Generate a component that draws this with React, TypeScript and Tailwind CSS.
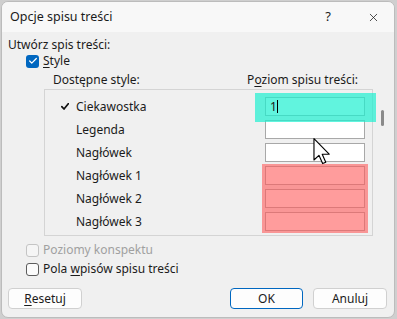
import { Check, X } from 'lucide-react';

const styles = ['Ciekawostka', 'Legenda', 'Nagłówek', 'Nagłówek 1', 'Nagłówek 2', 'Nagłówek 3'];

const Checkbox = ({ checked, disabled }: { checked?: boolean; disabled?: boolean }) => (
  <div
    className={
      checked
        ? 'w-[13px] h-[13px] rounded-[3px] bg-[#0067c0] flex items-center justify-center'
        : disabled
          ? 'w-[13px] h-[13px] rounded-[3px] border border-[#c4c4c4] bg-[#f5f5f5]'
          : 'w-[13px] h-[13px] rounded-[3px] border border-[#5c5c5c] bg-[#fbfbfb]'
    }
  >
    {checked && <Check className="w-[10px] h-[10px] text-white" strokeWidth={3} />}
  </div>
);

const Cursor = () => (
  <svg width="19" height="27" viewBox="0 0 13 19" className="absolute left-[268px] top-[48px]">
    <path d="M0.5 0.5 L0.5 15.5 L4 12.2 L6.6 18 L8.8 17 L6.3 11.4 L11.2 11.4 Z" fill="white" stroke="black" strokeWidth="0.8" strokeLinejoin="round" />
  </svg>
);

export default function App() {
  return (
    <div className="w-[397px] h-[319px] bg-[#cfcfcf] pl-[1px] pt-[1px] pr-[2px] pb-[1px] font-['Noto_Sans',sans-serif] text-[12px] text-[#1b1b1b]">
      <div className="h-full rounded-[7px] border border-[#bcbcbc] bg-[#f0f0f0] overflow-hidden flex flex-col">
        {/* Title bar */}
        <div className="h-[30px] shrink-0 bg-[#f8f8f8] flex items-center pl-[8px] pr-[14px]">
          <span className="text-[12.5px] flex-1">Opcje spisu treści</span>
          <span className="text-[13px] mr-[36px]">?</span>
          <X className="w-[13px] h-[13px] text-[#1b1b1b]" strokeWidth={1.4} />
        </div>

        {/* Body */}
        <div className="flex-1 flex flex-col px-[6px]">
          <div className="mt-[5px] leading-[16px]">Utwórz spis treści:</div>
          <div className="ml-[18px] flex items-center gap-[4px] leading-[16px]">
            <Checkbox checked />
            <span>
              <span className="underline underline-offset-2">S</span>tyle
            </span>
          </div>
          <div className="mt-[3px] flex leading-[16px]">
            <span className="ml-[45px]">Dostępne style:</span>
            <span className="ml-auto mr-[30px]">
              P<span className="underline underline-offset-2">o</span>ziom spisu treści:
            </span>
          </div>

          <div className="flex mt-[1px]">
            <div className="relative ml-[36px] w-[329px] h-[147px] border border-[#d4d4d4] pt-[5px]">
              {styles.map((s, i) => (
                <div key={s} className="h-[23px] flex items-center">
                  <div className="w-[31px] flex justify-end pr-[7px]">
                    {i === 0 && (
                      <svg width="8" height="7" viewBox="0 0 8 7">
                        <path d="M0.8 3.6 L3 6 L7.3 0.7" fill="none" stroke="#111" strokeWidth="1.7" strokeLinecap="round" strokeLinejoin="round" />
                      </svg>
                    )}
                  </div>
                  <span className="flex-1">{s}</span>
                  <div className="w-[100px] h-[19px] mr-[7px] bg-white border border-[#a8a8a8] flex items-center pl-[4px]">
                    {i === 0 && (
                      <span className="relative z-10 flex items-center">
                        <span className="leading-none">1</span>
                        <span className="w-[1px] h-[13px] bg-black" />
                      </span>
                    )}
                  </div>
                </div>
              ))}
              <div className="absolute left-[210px] top-[3px] w-[121px] h-[29px] bg-[#1ef0d0]/70" />
              <div className="absolute left-[217px] top-[74px] w-[106px] h-[69px] bg-[#ff5a5a]/60" />
              <Cursor />
            </div>
            <div className="ml-[8px] pt-[21px]">
              <div className="w-[3px] h-[16px] rounded-full bg-[#8a8a8a]" />
            </div>
          </div>

          <div className="mt-[6px] ml-[18px] flex items-center gap-[4px] leading-[16px] text-[#a0a0a0]">
            <Checkbox disabled />
            <span>Poziomy konspektu</span>
          </div>
          <div className="mt-[3px] ml-[18px] flex items-center gap-[4px] leading-[16px]">
            <Checkbox />
            <span>
              Pola <span className="underline underline-offset-2">w</span>pisów spisu treści
            </span>
          </div>

          <div className="mt-[11px] flex items-center">
            <button className="w-[74px] h-[21px] rounded-[4px] border border-[#d0d0d0] bg-[#fdfdfd]">
              <span className="underline underline-offset-2">R</span>esetuj
            </button>
            <button className="ml-auto w-[73px] h-[21px] rounded-[4px] border border-[#0067c0] bg-[#fdfdfd]">OK</button>
            <button className="ml-[10px] mr-[1px] w-[74px] h-[21px] rounded-[4px] border border-[#d0d0d0] bg-[#fdfdfd]">Anuluj</button>
          </div>
        </div>
      </div>
    </div>
  );
}
